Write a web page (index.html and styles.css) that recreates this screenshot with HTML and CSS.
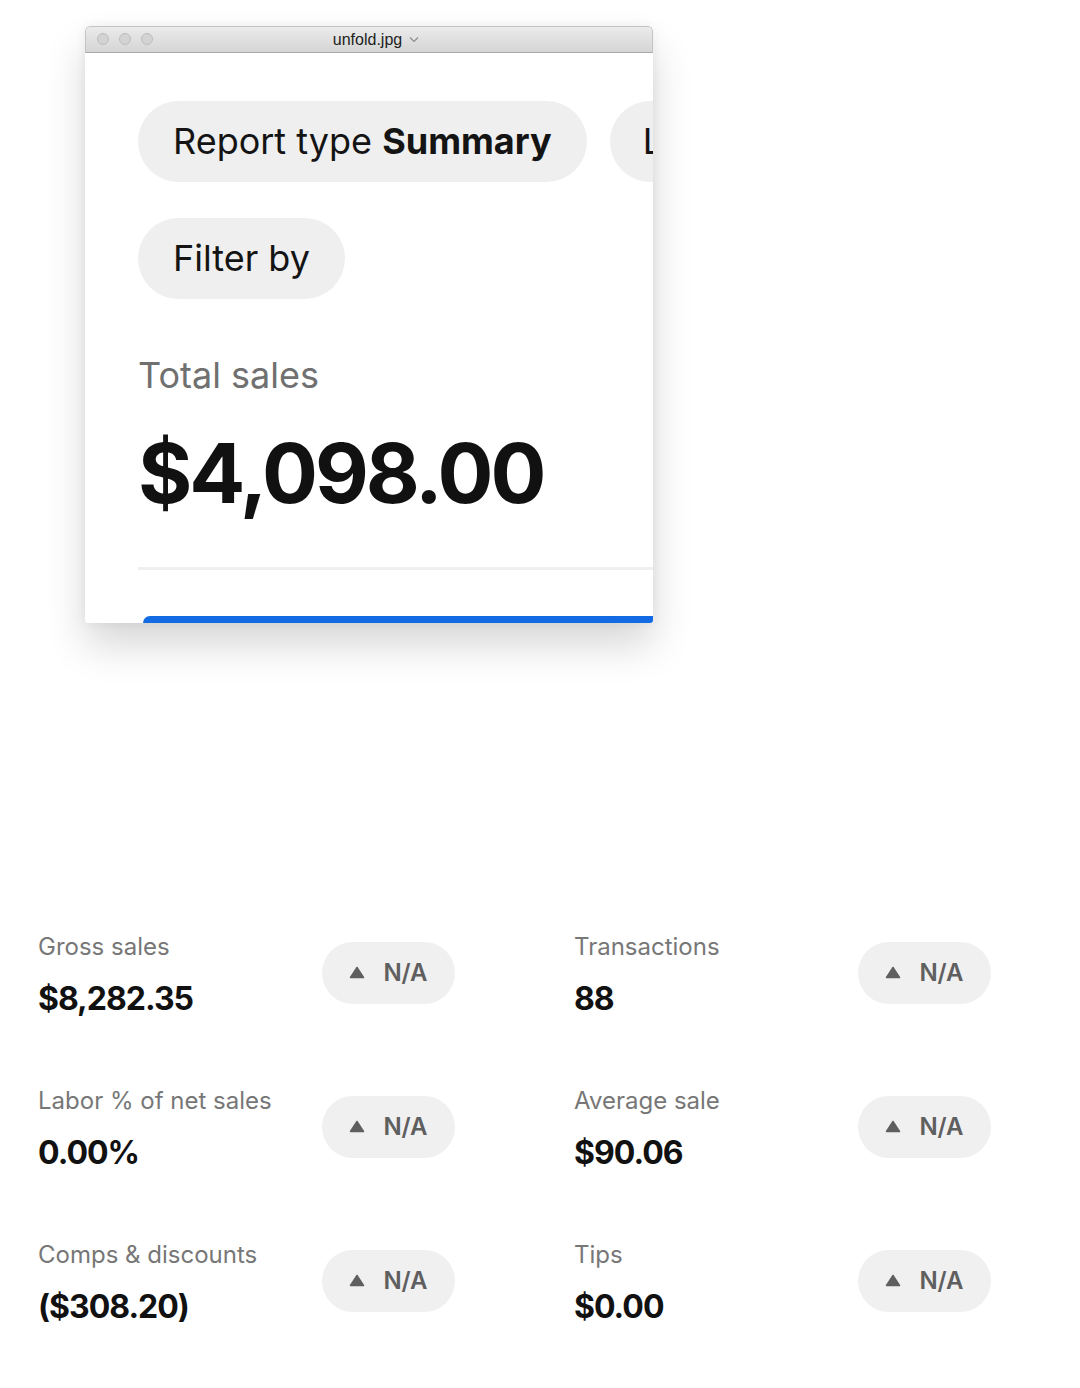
FILE: index.html
```html
<!DOCTYPE html>
<html lang="en">
<head>
  <meta charset="UTF-8">
  <title>unfold.jpg</title>
  <link rel="stylesheet" href="styles.css">
</head>
<body>

  <!-- preview window -->
  <div class="stage">
    <div class="window">
      <div class="titlebar">
        <div class="lights"><span></span><span></span><span></span></div>
        <div class="title">unfold.jpg <svg width="10" height="7" viewBox="0 0 10 7"><path d="M1 1.5 L5 5.5 L9 1.5" fill="none" stroke="#8a8a8a" stroke-width="1.1"/></svg></div>
      </div>
      <div class="win-body">
        <div class="chip-row">
          <div class="chip">Report type <b>Summary</b></div>
          <div class="chip chip-more">L</div>
        </div>
        <div class="chip-row">
          <div class="chip">Filter by</div>
        </div>
        <div class="total-label">Total sales</div>
        <div class="total-value">$4,098.00</div>
        <div class="divider"></div>
        <div class="blue-bar"></div>
      </div>
    </div>
  </div>

  <!-- metrics -->
  <div class="metrics">
    <div class="metric">
      <div class="metric-text"><div class="m-label">Gross sales</div><div class="m-value">$8,282.35</div></div>
      <div class="delta"><svg width="16" height="13" viewBox="0 0 16 13"><path d="M8 1.5 L14.5 11.5 L1.5 11.5 Z" fill="#5f5f5f" stroke="#5f5f5f" stroke-width="1.5" stroke-linejoin="round"/></svg>N/A</div>
    </div>
    <div class="metric">
      <div class="metric-text"><div class="m-label">Transactions</div><div class="m-value">88</div></div>
      <div class="delta"><svg width="16" height="13" viewBox="0 0 16 13"><path d="M8 1.5 L14.5 11.5 L1.5 11.5 Z" fill="#5f5f5f" stroke="#5f5f5f" stroke-width="1.5" stroke-linejoin="round"/></svg>N/A</div>
    </div>
    <div class="metric">
      <div class="metric-text"><div class="m-label">Labor % of net sales</div><div class="m-value">0.00%</div></div>
      <div class="delta"><svg width="16" height="13" viewBox="0 0 16 13"><path d="M8 1.5 L14.5 11.5 L1.5 11.5 Z" fill="#5f5f5f" stroke="#5f5f5f" stroke-width="1.5" stroke-linejoin="round"/></svg>N/A</div>
    </div>
    <div class="metric">
      <div class="metric-text"><div class="m-label">Average sale</div><div class="m-value">$90.06</div></div>
      <div class="delta"><svg width="16" height="13" viewBox="0 0 16 13"><path d="M8 1.5 L14.5 11.5 L1.5 11.5 Z" fill="#5f5f5f" stroke="#5f5f5f" stroke-width="1.5" stroke-linejoin="round"/></svg>N/A</div>
    </div>
    <div class="metric">
      <div class="metric-text"><div class="m-label">Comps &amp; discounts</div><div class="m-value">($308.20)</div></div>
      <div class="delta"><svg width="16" height="13" viewBox="0 0 16 13"><path d="M8 1.5 L14.5 11.5 L1.5 11.5 Z" fill="#5f5f5f" stroke="#5f5f5f" stroke-width="1.5" stroke-linejoin="round"/></svg>N/A</div>
    </div>
    <div class="metric">
      <div class="metric-text"><div class="m-label">Tips</div><div class="m-value">$0.00</div></div>
      <div class="delta"><svg width="16" height="13" viewBox="0 0 16 13"><path d="M8 1.5 L14.5 11.5 L1.5 11.5 Z" fill="#5f5f5f" stroke="#5f5f5f" stroke-width="1.5" stroke-linejoin="round"/></svg>N/A</div>
    </div>
  </div>

</body>
</html>
```

FILE: styles.css
```css
* { margin: 0; padding: 0; box-sizing: border-box; }
body {
  font-family: Inter, "Noto Sans", Arial, sans-serif;
  background-color: white;
  color: #111;
}

.stage {
  padding: 26px 0 0 85px;
}

.window {
  width: 568px;
  border-radius: 5px 5px 3px 3px;
  overflow: hidden;
  background-color: white;
  box-shadow: 0 22px 40px rgba(0, 0, 0, 0.16), 0 0 12px rgba(0, 0, 0, 0.06);
}

.titlebar {
  position: relative;
  height: 27px;
  background: linear-gradient(#ebebeb, #d5d5d5);
  border: 1px solid #c4c4c4;
  border-bottom-color: #a9a9a9;
  border-radius: 5px 5px 0 0;
  display: flex;
  align-items: center;
  justify-content: center;
}

.lights {
  position: absolute;
  left: 11px;
  top: 6px;
  display: flex;
  gap: 10px;
}
.lights span {
  width: 12px;
  height: 12px;
  border-radius: 50%;
  background-color: #d3d3d3;
  border: 1px solid #bdbdbd;
}

.title {
  font-family: "Liberation Sans", Arial, sans-serif;
  font-size: 16px;
  color: #222;
  display: flex;
  align-items: center;
  gap: 7px;
  margin-left: 14px;
}

.win-body {
  padding: 48px 0 0 53px;
  overflow: hidden;
}

.chip-row {
  display: flex;
  gap: 23px;
  margin-bottom: 36px;
  white-space: nowrap;
}
.chip {
  flex-shrink: 0;
  height: 81px;
  padding: 0 35px;
  border-radius: 41px;
  background-color: #efefef;
  font-size: 36px;
  line-height: 81px;
  color: #141414;
}
.chip b { font-weight: 700; }
.chip-more {
  min-width: 80px;
  padding-left: 33px;
}

.total-label {
  margin-top: 54px;
  font-size: 36px;
  line-height: 44px;
  color: #707070;
}

.total-value {
  margin-top: 26px;
  font-size: 83px;
  line-height: 100px;
  font-weight: 700;
  letter-spacing: -3px;
  color: #111;
}

.divider {
  margin-top: 44px;
  height: 3px;
  background-color: #efefef;
}

.blue-bar {
  margin: 46px 0 0 5px;
  height: 7px;
  background-color: #136be4;
  border-radius: 20px 0 0 0;
}

.metrics {
  margin-top: 309px;
  padding-left: 38px;
  display: grid;
  grid-template-columns: 536px 536px;
  row-gap: 67px;
}

.metric {
  display: flex;
  align-items: center;
}

.metric-text {
  width: 284px;
}

.m-label {
  font-size: 24px;
  line-height: 30px;
  color: #777;
}

.m-value {
  margin-top: 17px;
  font-size: 32px;
  line-height: 40px;
  font-weight: 700;
  letter-spacing: -1px;
  color: #111;
}

.delta {
  width: 133px;
  height: 62px;
  border-radius: 31px;
  background-color: #f0f0f0;
  display: flex;
  align-items: center;
  justify-content: center;
  gap: 18px;
  font-size: 24px;
  font-weight: 600;
  color: #5f5f5f;
  margin-top: -6px;
}
```
